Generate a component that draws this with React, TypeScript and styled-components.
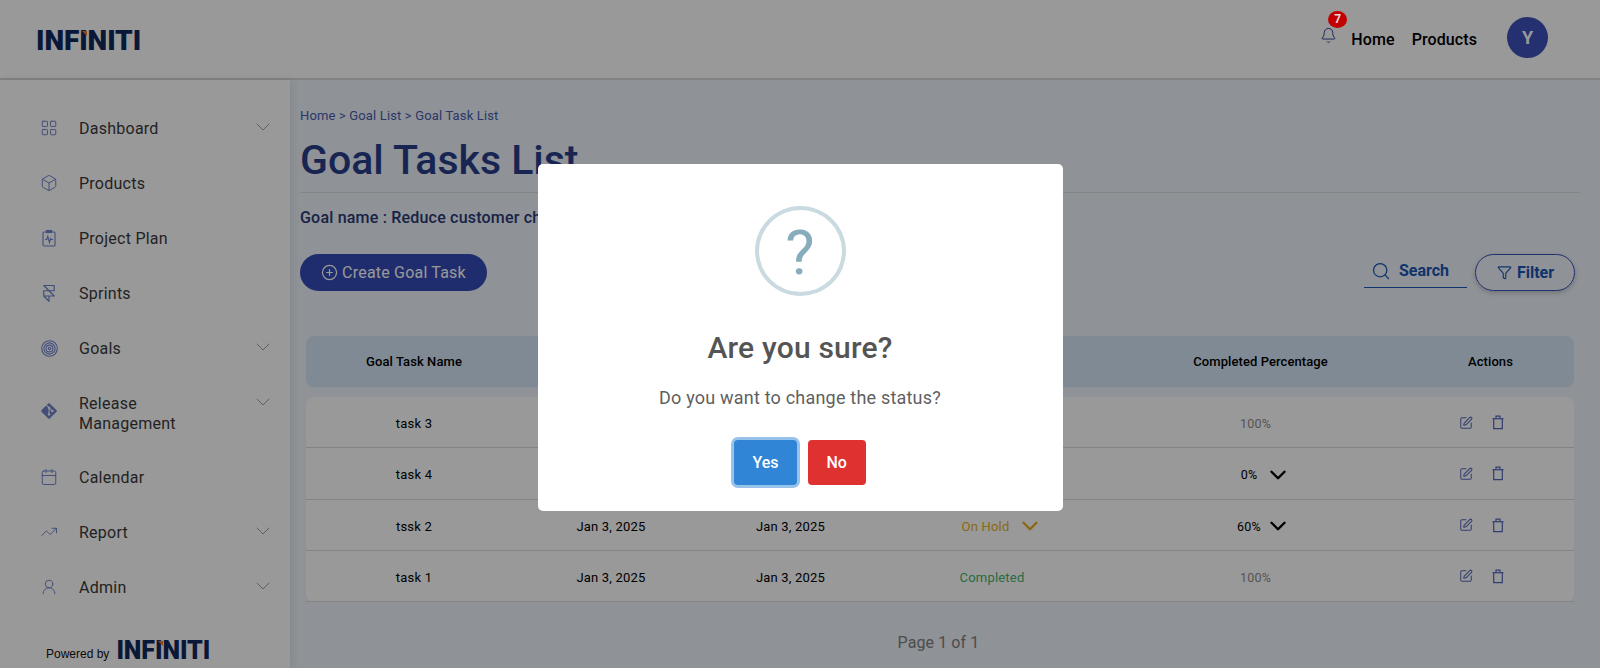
import React from "react";
import styled, { createGlobalStyle } from "styled-components";
import {
  Bell, Box, Calendar, ChevronDown, CirclePlus, Filter, Framer, LayoutGrid, Search, SquarePen, TrendingUp, UserRound,
} from "lucide-react";
import { FaGitAlt } from "react-icons/fa";

const Global = createGlobalStyle`
  html, body { margin: 0; padding: 0; height: 100%; }
  body { font-family: Roboto, "Liberation Sans", sans-serif; background: #eef3fa; overflow: hidden; }
  * { box-sizing: border-box; }
`;

const Page = styled.div`
  position: relative;
  width: 1600px;
  height: 668px;
  overflow: hidden;
  display: flex;
  flex-direction: column;
`;

const Header = styled.header`
  height: 80px;
  flex: none;
  background: #fff;
  border-bottom: 2px solid #d8d8d8;
  display: flex;
  align-items: center;
  padding: 0 52px 0 36px;
`;

const LogoWrap = styled.div<{ $size: number; $drop?: number }>`
  position: relative;
  font-family: Roboto, Inter, sans-serif;
  font-weight: 900;
  font-size: ${(p) => p.$size}px;
  line-height: 1;
  letter-spacing: -0.003em;
  color: #11295e;
  white-space: nowrap;
  margin-top: ${(p) => p.$drop ?? 0}px;
  &::after {
    content: "";
    position: absolute;
    left: 44%;
    top: 13%;
    width: 0;
    height: 0;
    border-left: 0.2em solid transparent;
    border-top: 0.2em solid #f0782a;
  }
`;

const TopNav = styled.nav`
  margin-left: auto;
  display: flex;
  align-items: center;
`;

const BellWrap = styled.div`
  position: relative;
  width: 17px;
  height: 18px;
  color: #1f3a8a;
  margin-right: 14px;
  margin-top: -7px;
  display: flex;
`;

const Badge = styled.span`
  position: absolute;
  z-index: 2;
  left: 8px;
  top: -16px;
  width: 19px;
  height: 17px;
  border-radius: 50%;
  background: #c20000;
  color: #e6dada;
  font-size: 12px;
  font-weight: 700;
  display: flex;
  align-items: center;
  justify-content: center;
`;

const TopLink = styled.a`
  font-size: 16px;
  font-weight: 500;
  letter-spacing: 0.1px;
  color: #000;
  margin-right: 17px;
  line-height: 20px;
  position: relative;
  top: 1px;
`;

const Avatar = styled.div`
  width: 41px;
  height: 41px;
  border-radius: 50%;
  background: #3f50bb;
  color: #fff;
  font-weight: 700;
  font-size: 18px;
  display: flex;
  align-items: center;
  justify-content: center;
  margin-left: 13px;
  margin-top: -4px;
`;

const Main = styled.div`
  flex: 1;
  display: flex;
  min-height: 0;
`;

const Sidebar = styled.aside`
  width: 290px;
  flex: none;
  background: #fff;
  box-shadow: 2px 0 8px rgba(0, 0, 0, 0.08);
  padding-top: 21px;
  display: flex;
  flex-direction: column;
`;

const MenuItem = styled.div<{ $tall?: boolean }>`
  height: ${(p) => (p.$tall ? 74 : 55)}px;
  flex: none;
  display: flex;
  align-items: center;
  padding: ${(p) => (p.$tall ? 2 : 0)}px 15px 0 41px;
`;

const MenuIcon = styled.span<{ $tall?: boolean }>`
  width: 16px;
  height: 16px;
  flex: none;
  display: flex;
  align-items: center;
  justify-content: center;
  color: #7083cc;
  margin-right: 22px;
  margin-top: ${(p) => (p.$tall ? -6 : -1)}px;
  svg { flex: none; }
`;

const MenuLabel = styled.span`
  font-size: 16px;
  line-height: 20px;
  letter-spacing: 0.25px;
  max-width: 130px;
  color: #3a3a3a;
`;

const MenuChevron = styled.span<{ $top?: boolean }>`
  margin-left: auto;
  display: flex;
  color: #888;
  align-self: ${(p) => (p.$top ? "flex-start" : "center")};
  margin-top: ${(p) => (p.$top ? 12 : -3)}px;
`;

const Powered = styled.div`
  margin: 23px 0 0 46px;
  display: flex;
  align-items: center;
  gap: 7px;
`;

const PoweredText = styled.span`
  font-family: "Liberation Sans", Arial, sans-serif;
  font-size: 12px;
  color: #111;
  position: relative;
  top: 3px;
`;

const Content = styled.main`
  flex: 1;
  padding: 26px 20px 0 10px;
  min-width: 0;
`;

const Crumbs = styled.div`
  font-size: 13px;
  line-height: 20px;
  letter-spacing: 0.15px;
  color: #4a5db0;
`;

const Title = styled.h1`
  margin: 9px 0 0;
  font-size: 41px;
  line-height: 50px;
  font-weight: 500;
  color: #283f8a;
`;

const Rule = styled.div`
  margin-top: 7px;
  height: 1px;
  background: #dcdcdc;
`;

const GoalName = styled.div`
  margin-top: 15px;
  font-size: 16px;
  line-height: 20px;
  font-weight: 500;
  letter-spacing: 0.2px;
  color: #2a3a75;
`;

const Toolbar = styled.div`
  margin-top: 26px;
  display: flex;
  align-items: center;
  height: 37px;
`;

const CreateButton = styled.button`
  width: 187px;
  height: 37px;
  border: 0;
  border-radius: 19px;
  background: #344bb7;
  color: #fff;
  font: 400 16px Roboto, sans-serif;
  letter-spacing: 0.2px;
  display: flex;
  align-items: center;
  justify-content: center;
  gap: 4px;
  padding: 0;
`;

const SearchBox = styled.div`
  margin-left: auto;
  width: 103px;
  height: 34px;
  border-bottom: 1.5px solid #1a55b5;
  color: #1a55b5;
  display: flex;
  align-items: center;
  padding-left: 7px;
  gap: 8px;
  font-size: 16px;
  font-weight: 700;
  margin-top: -3px;
`;

const FilterButton = styled.button`
  margin-left: 8px;
  margin-right: 5px;
  width: 100px;
  height: 37px;
  border: 1px solid #3552b5;
  border-radius: 19px;
  background: transparent;
  box-shadow: 0 2px 5px rgba(0, 0, 0, 0.2);
  color: #1a55b5;
  font: 700 16px Roboto, sans-serif;
  display: flex;
  align-items: center;
  justify-content: center;
  gap: 5px;
  padding: 0 0 0 1px;
`;

const cols = "216px 178px 181px 222px 315px 145px";

const TableHead = styled.div`
  margin: 45px 6px 0;
  height: 51px;
  background: #d4e6f7;
  border-radius: 8px;
  display: grid;
  grid-template-columns: ${cols};
  align-items: center;
`;

const HeadCell = styled.div`
  font-size: 13px;
  font-weight: 500;
  letter-spacing: 0.08px;
  color: #000;
  text-align: center;
`;

const TableBody = styled.div`
  margin: 10px 6px 0;
  background: #fff;
  border-radius: 8px;
`;

const Row = styled.div`
  height: 51.25px;
  padding-top: 3px;
  display: grid;
  grid-template-columns: ${cols};
  align-items: center;
  border-bottom: 1px solid #dcdcdc;
`;

const Cell = styled.div`
  font-size: 13px;
  letter-spacing: 0.2px;
  color: #000;
  text-align: center;
`;

const StatusCell = styled.div<{ $color: string; $open?: boolean }>`
  font-size: 13px;
  letter-spacing: 0.2px;
  color: ${(p) => p.$color};
  display: flex;
  align-items: center;
  justify-content: center;
  gap: 8px;
  height: 26px;
  padding-left: ${(p) => (p.$open ? 21 : 0)}px;
`;

const Percent = styled.div<{ $muted?: boolean }>`
  font-size: 12.5px;
  letter-spacing: 0.2px;
  color: ${(p) => (p.$muted ? "#8e8e8e" : "#000")};
  display: flex;
  align-items: center;
  justify-content: center;
  height: 26px;
  padding: 0 ${(p) => (p.$muted ? 10 : 0)}px 0 ${(p) => (p.$muted ? 0 : 3)}px;
`;

const PercentValue = styled.span`
  width: 32px;
  text-align: center;
`;

const Actions = styled.div`
  display: flex;
  justify-content: center;
  align-items: center;
  gap: 19px;
  color: #5567bd;
  padding-right: 18px;
  margin-top: -2px;
`;

const PageInfo = styled.div`
  margin-top: 31px;
  text-align: center;
  font-size: 16px;
  line-height: 20px;
  letter-spacing: 0.1px;
  color: #808080;
  padding-right: 3px;
`;

const Overlay = styled.div`
  position: absolute;
  inset: 0;
  background: rgba(0, 0, 0, 0.4);
  display: flex;
  justify-content: center;
  align-items: flex-start;
  padding-top: 164px;
`;

const Modal = styled.div`
  width: 525px;
  height: 347px;
  background: #fff;
  border-radius: 5px;
  display: flex;
  flex-direction: column;
  align-items: center;
  padding-top: 42px;
`;

const QuestionIcon = styled.div`
  width: 91px;
  height: 90px;
  border-radius: 50%;
  border: 4.5px solid #c9dae1;
  color: #87adbd;
  font-size: 62px;
  line-height: 1;
  padding-top: 3px;
  display: flex;
  align-items: center;
  justify-content: center;
`;

const ModalTitle = styled.h2`
  margin: 34px 0 0;
  font-size: 30px;
  line-height: 36px;
  font-weight: 500;
  letter-spacing: 0.2px;
  color: #545454;
`;

const ModalText = styled.p`
  margin: 21px 0 0;
  font-size: 18px;
  line-height: 22px;
  letter-spacing: 0.2px;
  color: #5f5f5f;
`;

const ButtonRow = styled.div`
  margin-top: 31px;
  display: flex;
  gap: 11px;
`;

const ModalButton = styled.button<{ $color: string; $focus?: boolean }>`
  height: 45px;
  padding: 0 1.13em;
  min-width: 58px;
  border: 0;
  border-radius: 4px;
  background: ${(p) => p.$color};
  color: #fff;
  font: 500 16px Roboto, sans-serif;
  box-shadow: ${(p) => (p.$focus ? "0 0 0 3px rgba(48,133,214,0.5)" : "none")};
`;

const ClipboardPulse = () => (
  <svg width="14" height="17" viewBox="0 0 14 17" fill="none" stroke="currentColor" strokeWidth="1.1">
    <rect x="1" y="2" width="12" height="14" rx="1" />
    <rect x="4.5" y="0.5" width="5" height="2" fill="currentColor" />
    <path d="M3 9.5h1.8l1-3 1.6 6 1.2-4 .6 1h1.8" />
  </svg>
);

const Target = () => (
  <svg width="17" height="17" viewBox="0 0 17 17" fill="none" stroke="currentColor" strokeWidth="1.1">
    <circle cx="8.5" cy="8.5" r="7.8" />
    <circle cx="8.5" cy="8.5" r="5.6" />
    <circle cx="8.5" cy="8.5" r="3.4" />
    <circle cx="8.5" cy="8.5" r="1.2" />
  </svg>
);

const TrashCup = () => (
  <svg width="12" height="15" viewBox="0 0 12 15" fill="none" stroke="currentColor" strokeWidth="1.2">
    <path d="M0.5 3.7h11" />
    <path d="M4 3.5V1.2h4v2.3" />
    <path d="M1.7 3.7V13.6h8.6V3.7" />
  </svg>
);

const menu: { label: string; icon: React.ReactNode; chevron?: boolean; tall?: boolean }[] = [
  { label: "Dashboard", icon: <LayoutGrid size={18} strokeWidth={1.3} />, chevron: true },
  { label: "Products", icon: <Box size={18} strokeWidth={1.3} /> },
  { label: "Project Plan", icon: <ClipboardPulse /> },
  { label: "Sprints", icon: <Framer size={18} strokeWidth={1.6} /> },
  { label: "Goals", icon: <Target />, chevron: true },
  { label: "Release Management", icon: <FaGitAlt size={18} />, chevron: true, tall: true },
  { label: "Calendar", icon: <Calendar size={18} strokeWidth={1.3} /> },
  { label: "Report", icon: <TrendingUp size={18} strokeWidth={1.3} />, chevron: true },
  { label: "Admin", icon: <UserRound size={18} strokeWidth={1.3} />, chevron: true },
];

type RowData = { name: string; status: string; color: string; open: boolean; pct: string; pctOpen: boolean };
const rows: RowData[] = [
  { name: "task 3", status: "Completed", color: "#3fb56f", open: false, pct: "100%", pctOpen: false },
  { name: "task 4", status: "To Do", color: "#4a5cb5", open: true, pct: "0%", pctOpen: true },
  { name: "tssk 2", status: "On Hold", color: "#e8b020", open: true, pct: "60%", pctOpen: true },
  { name: "task 1", status: "Completed", color: "#3fb56f", open: false, pct: "100%", pctOpen: false },
];

export default function App() {
  return (
    <Page>
      <Global />
      <Header>
        <LogoWrap $size={28} $drop={4}>INFINITI</LogoWrap>
        <TopNav>
          <BellWrap>
            <Bell size={17} strokeWidth={1.3} />
            <Badge>7</Badge>
          </BellWrap>
          <TopLink>Home</TopLink>
          <TopLink>Products</TopLink>
          <Avatar>Y</Avatar>
        </TopNav>
      </Header>
      <Main>
        <Sidebar>
          {menu.map((m) => (
            <MenuItem key={m.label} $tall={m.tall}>
              <MenuIcon $tall={m.tall}>{m.icon}</MenuIcon>
              <MenuLabel>{m.label}</MenuLabel>
              {m.chevron && (
                <MenuChevron $top={m.tall}>
                  <ChevronDown size={24} strokeWidth={0.8} />
                </MenuChevron>
              )}
            </MenuItem>
          ))}
          <Powered>
            <PoweredText>Powered by</PoweredText>
            <LogoWrap $size={25}>INFINITI</LogoWrap>
          </Powered>
        </Sidebar>
        <Content>
          <Crumbs>Home &gt; Goal List &gt; Goal Task List</Crumbs>
          <Title>Goal Tasks List</Title>
          <Rule />
          <GoalName>Goal name : Reduce customer churn</GoalName>
          <Toolbar>
            <CreateButton>
              <CirclePlus size={17} strokeWidth={1.75} />
              Create Goal Task
            </CreateButton>
            <SearchBox>
              <Search size={20} strokeWidth={1.5} />
              Search
            </SearchBox>
            <FilterButton>
              <Filter size={15} strokeWidth={1.75} />
              Filter
            </FilterButton>
          </Toolbar>
          <TableHead>
            <HeadCell>Goal Task Name</HeadCell>
            <HeadCell>Start Date</HeadCell>
            <HeadCell>End Date</HeadCell>
            <HeadCell>Status</HeadCell>
            <HeadCell>Completed Percentage</HeadCell>
            <HeadCell>Actions</HeadCell>
          </TableHead>
          <TableBody>
            {rows.map((r) => (
              <Row key={r.name}>
                <Cell>{r.name}</Cell>
                <Cell>Jan 3, 2025</Cell>
                <Cell>Jan 3, 2025</Cell>
                <StatusCell $color={r.color} $open={r.open}>
                  {r.status}
                  {r.open && <ChevronDown size={26} strokeWidth={2.25} />}
                </StatusCell>
                <Percent $muted={!r.pctOpen}>
                  <PercentValue>{r.pct}</PercentValue>
                  {r.pctOpen && <ChevronDown size={26} strokeWidth={2.25} />}
                </Percent>
                <Actions>
                  <SquarePen size={14} strokeWidth={1.75} />
                  <TrashCup />
                </Actions>
              </Row>
            ))}
          </TableBody>
          <PageInfo>Page 1 of 1</PageInfo>
        </Content>
      </Main>
      <Overlay>
        <Modal>
          <QuestionIcon>?</QuestionIcon>
          <ModalTitle>Are you sure?</ModalTitle>
          <ModalText>Do you want to change the status?</ModalText>
          <ButtonRow>
            <ModalButton $color="#3085d6" $focus>Yes</ModalButton>
            <ModalButton $color="#e03131">No</ModalButton>
          </ButtonRow>
        </Modal>
      </Overlay>
    </Page>
  );
}
